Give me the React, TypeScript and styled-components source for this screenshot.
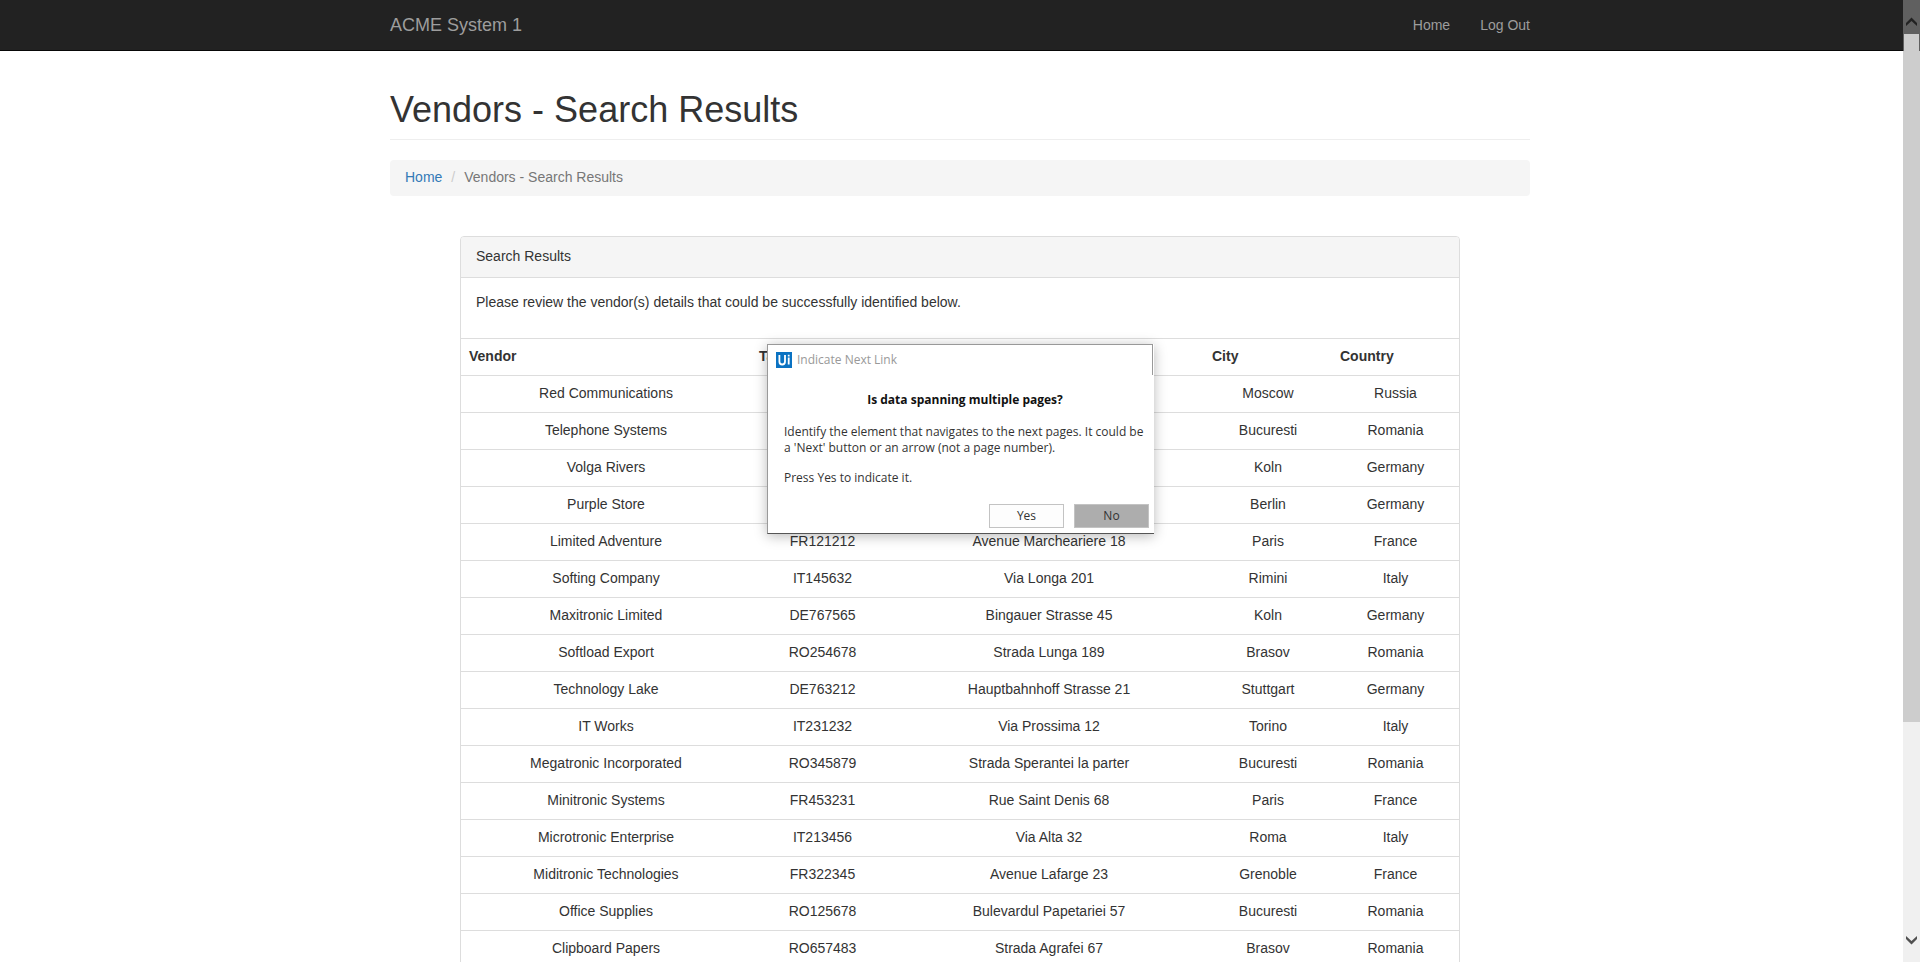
import React from "react";
import styled, { createGlobalStyle } from "styled-components";

const GlobalStyle = createGlobalStyle`
  *, *::before, *::after { box-sizing: border-box; }
  body {
    margin: 0;
    background: #fff;
    color: #333;
    font: 14px/20px "Liberation Sans", Arial, sans-serif;
  }
`;

const Page = styled.div`
  position: relative;
  height: 100vh;
  overflow: hidden;
`;

const Container = styled.div`
  max-width: 1170px;
  margin: 0 auto;
  padding: 0 15px;
`;

const Navbar = styled.header`
  background: #222;
  border-bottom: 1px solid #080808;
`;

const NavInner = styled(Container)`
  display: flex;
  justify-content: space-between;
  align-items: center;
  height: 50px;
`;

const Brand = styled.a`
  font-size: 18px;
  color: #9d9d9d;
  text-decoration: none;
`;

const NavLinks = styled.nav`
  display: flex;
  gap: 30px;
`;

const NavLink = styled.a`
  color: #9d9d9d;
  text-decoration: none;
`;

const PageTitle = styled.h1`
  margin: 39px 0 20px;
  padding-bottom: 9px;
  border-bottom: 1px solid #eee;
  font-size: 36px;
  font-weight: 400;
  line-height: 40px;
`;

const Breadcrumb = styled.ol`
  display: flex;
  margin: 0;
  padding: 7px 15px 9px;
  list-style: none;
  background: #f5f5f5;
  border-radius: 4px;
`;

const Crumb = styled.li`
  color: #777;

  & + &::before {
    content: "/";
    padding: 0 9px;
    color: #ccc;
  }

  a {
    color: #337ab7;
    text-decoration: none;
  }
`;

const Panel = styled.section`
  max-width: 1000px;
  margin: 40px auto 20px;
  border: 1px solid #ddd;
  border-radius: 4px;
`;

const PanelHeading = styled.div`
  padding: 9px 15px 11px;
  background: #f5f5f5;
  border-bottom: 1px solid #ddd;
  border-radius: 3px 3px 0 0;
`;

const PanelBody = styled.p`
  margin: 0;
  padding: 14px 15px 26px;
`;

const Table = styled.table`
  width: 100%;
  table-layout: fixed;
  border-spacing: 0;
`;

const HeadCell = styled.th<{ $width?: number }>`
  width: ${(p) => (p.$width ? `${p.$width}px` : "auto")};
  padding: 7px 8px 9px;
  border-top: 1px solid #ddd;
  text-align: left;
`;

const Cell = styled.td`
  padding: 7px 8px 9px;
  border-top: 1px solid #ddd;
  text-align: center;
`;

const Scrollbar = styled.div`
  position: fixed;
  top: 0;
  right: 0;
  bottom: 0;
  width: 17px;
  display: flex;
  flex-direction: column;
  background: #f0f0f0;
`;

const NavShade = styled.div`
  position: absolute;
  top: 0;
  left: 0;
  right: 0;
  height: 51px;
  background: #606060;
`;

const ScrollButton = styled.button`
  position: relative;
  display: flex;
  justify-content: center;
  align-items: center;
  height: 34px;
  padding: 0;
  border: 0;
  background: transparent;
`;

const UpButton = styled(ScrollButton)`
  padding-top: 9px;
  color: #222;
`;

const DownButton = styled(ScrollButton)`
  padding-bottom: 9px;
  color: #505050;
`;

const Track = styled.div`
  position: relative;
  flex: 1;
`;

const Thumb = styled.div`
  height: 77%;
  background: #cdcdcd;

  &::before {
    content: "";
    display: block;
    height: 17px;
    border: solid #606060;
    border-width: 0 1px;
  }
`;

const Dialog = styled.div`
  position: absolute;
  top: 344px;
  left: calc(50% - 193px);
  width: 387px;
  background: #fff;
  border-left: 1px solid #999;
  border-bottom: 1px solid #555;
  box-shadow: 0 2px 12px rgba(0, 0, 0, 0.28);
  color: #333;
  font: 12px/16px "Open Sans", "Noto Sans CJK KR", sans-serif;
`;

const DialogTitle = styled.div`
  display: flex;
  align-items: center;
  gap: 5px;
  height: 31px;
  margin-right: 1px;
  padding-left: 8px;
  border: solid #999;
  border-width: 1px 1px 0 0;
  color: #999;
`;

const DialogBody = styled.div`
  padding: 17px 8px 18px 16px;
`;

const Question = styled.h2`
  margin: 0 0 16px;
  color: #111;
  font-size: 12px;
  line-height: 16px;
  text-align: center;
`;

const Hint = styled.p`
  margin: 0 0 14px;
  white-space: nowrap;

  &:last-child {
    margin: 0;
  }
`;

const DialogActions = styled.div`
  display: flex;
  justify-content: flex-end;
  gap: 10px;
  padding: 0 5px 5px;
`;

const DialogButton = styled.button<{ $active?: boolean }>`
  width: 75px;
  height: 24px;
  padding: 0;
  border: 1px solid #c3c3c3;
  background: ${(p) => (p.$active ? "#adadad" : "#fdfdfd")};
  color: #333;
  font: inherit;
`;

const columns: { name: string; width?: number }[] = [
  { name: "Vendor", width: 290 },
  { name: "Tax ID", width: 143 },
  { name: "Address", width: 310 },
  { name: "City", width: 128 },
  { name: "Country" },
];

const vendors = [
  ["Red Communications", "RU567434", "Bolshaya Street 21", "Moscow", "Russia"],
  ["Telephone Systems", "RO123456", "Strada Mare 12", "Bucuresti", "Romania"],
  ["Volga Rivers", "DE325476", "Rhein Strasse 8", "Koln", "Germany"],
  ["Purple Store", "DE453672", "Lange Strasse 34", "Berlin", "Germany"],
  ["Limited Adventure", "FR121212", "Avenue Marcheariere 18", "Paris", "France"],
  ["Softing Company", "IT145632", "Via Longa 201", "Rimini", "Italy"],
  ["Maxitronic Limited", "DE767565", "Bingauer Strasse 45", "Koln", "Germany"],
  ["Softload Export", "RO254678", "Strada Lunga 189", "Brasov", "Romania"],
  ["Technology Lake", "DE763212", "Hauptbahnhoff Strasse 21", "Stuttgart", "Germany"],
  ["IT Works", "IT231232", "Via Prossima 12", "Torino", "Italy"],
  ["Megatronic Incorporated", "RO345879", "Strada Sperantei la parter", "Bucuresti", "Romania"],
  ["Minitronic Systems", "FR453231", "Rue Saint Denis 68", "Paris", "France"],
  ["Microtronic Enterprise", "IT213456", "Via Alta 32", "Roma", "Italy"],
  ["Miditronic Technologies", "FR322345", "Avenue Lafarge 23", "Grenoble", "France"],
  ["Office Supplies", "RO125678", "Bulevardul Papetariei 57", "Bucuresti", "Romania"],
  ["Clipboard Papers", "RO657483", "Strada Agrafei 67", "Brasov", "Romania"],
];

// These rows' middle cells lie behind the dialog and stay empty while it is open.
const COVERED_ROWS = 4;
const isCovered = (row: number, column: number) =>
  row < COVERED_ROWS && (column === 1 || column === 2);

const Logo = () => (
  <svg width="16" height="16" viewBox="0 0 16 16" aria-hidden="true">
    <rect width="16" height="16" fill="#0a72c2" />
    <path
      d="M3.4 3v6.500c0 2 1 3 2.800 3s2.800-1 2.800-3V3M12.700 5.600v7M12.700 2.700v1.700"
      fill="none"
      stroke="#fff"
      strokeWidth="1.800"
    />
  </svg>
);

const Chevron = ({ up }: { up?: boolean }) => (
  <svg width="11" height="9" viewBox="0 0 11 9" aria-hidden="true">
    <path d={up ? "M0 9V6L5.500 0.500 11 6V9L5.500 4z" : "M0 0V3L5.500 8.500 11 3V0L5.500 5z"} fill="currentColor" />
  </svg>
);

export default function App() {
  return (
    <Page>
      <GlobalStyle />
      <Navbar>
        <NavInner>
          <Brand href="#">ACME System 1</Brand>
          <NavLinks>
            <NavLink href="#">Home</NavLink>
            <NavLink href="#">Log Out</NavLink>
          </NavLinks>
        </NavInner>
      </Navbar>

      <Container as="main">
        <PageTitle>Vendors - Search Results</PageTitle>
        <Breadcrumb>
          <Crumb>
            <a href="#">Home</a>
          </Crumb>
          <Crumb>Vendors - Search Results</Crumb>
        </Breadcrumb>

        <Panel>
          <PanelHeading>Search Results</PanelHeading>
          <PanelBody>
            Please review the vendor(s) details that could be successfully identified below.
          </PanelBody>
          <Table>
            <thead>
              <tr>
                {columns.map((c) => (
                  <HeadCell key={c.name} scope="col" $width={c.width}>
                    {c.name === "Address" ? "" : c.name}
                  </HeadCell>
                ))}
              </tr>
            </thead>
            <tbody>
              {vendors.map((row, r) => (
                <tr key={row[0]}>
                  {row.map((value, i) => (
                    <Cell key={i}>{isCovered(r, i) ? "" : value}</Cell>
                  ))}
                </tr>
              ))}
            </tbody>
          </Table>
        </Panel>
      </Container>

      <Dialog role="dialog" aria-labelledby="dialog-title">
        <DialogTitle>
          <Logo />
          <span id="dialog-title">Indicate Next Link</span>
        </DialogTitle>
        <DialogBody>
          <Question>Is data spanning multiple pages?</Question>
          <Hint>
            Identify the element that navigates to the next pages. It could be
            <br />a 'Next' button or an arrow (not a page number).
          </Hint>
          <Hint>Press Yes to indicate it.</Hint>
        </DialogBody>
        <DialogActions>
          <DialogButton type="button">Yes</DialogButton>
          <DialogButton type="button" $active>
            No
          </DialogButton>
        </DialogActions>
      </Dialog>

      <Scrollbar>
        <NavShade />
        <UpButton type="button" aria-label="Scroll up">
          <Chevron up />
        </UpButton>
        <Track>
          <Thumb />
        </Track>
        <DownButton type="button" aria-label="Scroll down">
          <Chevron />
        </DownButton>
      </Scrollbar>
    </Page>
  );
}
